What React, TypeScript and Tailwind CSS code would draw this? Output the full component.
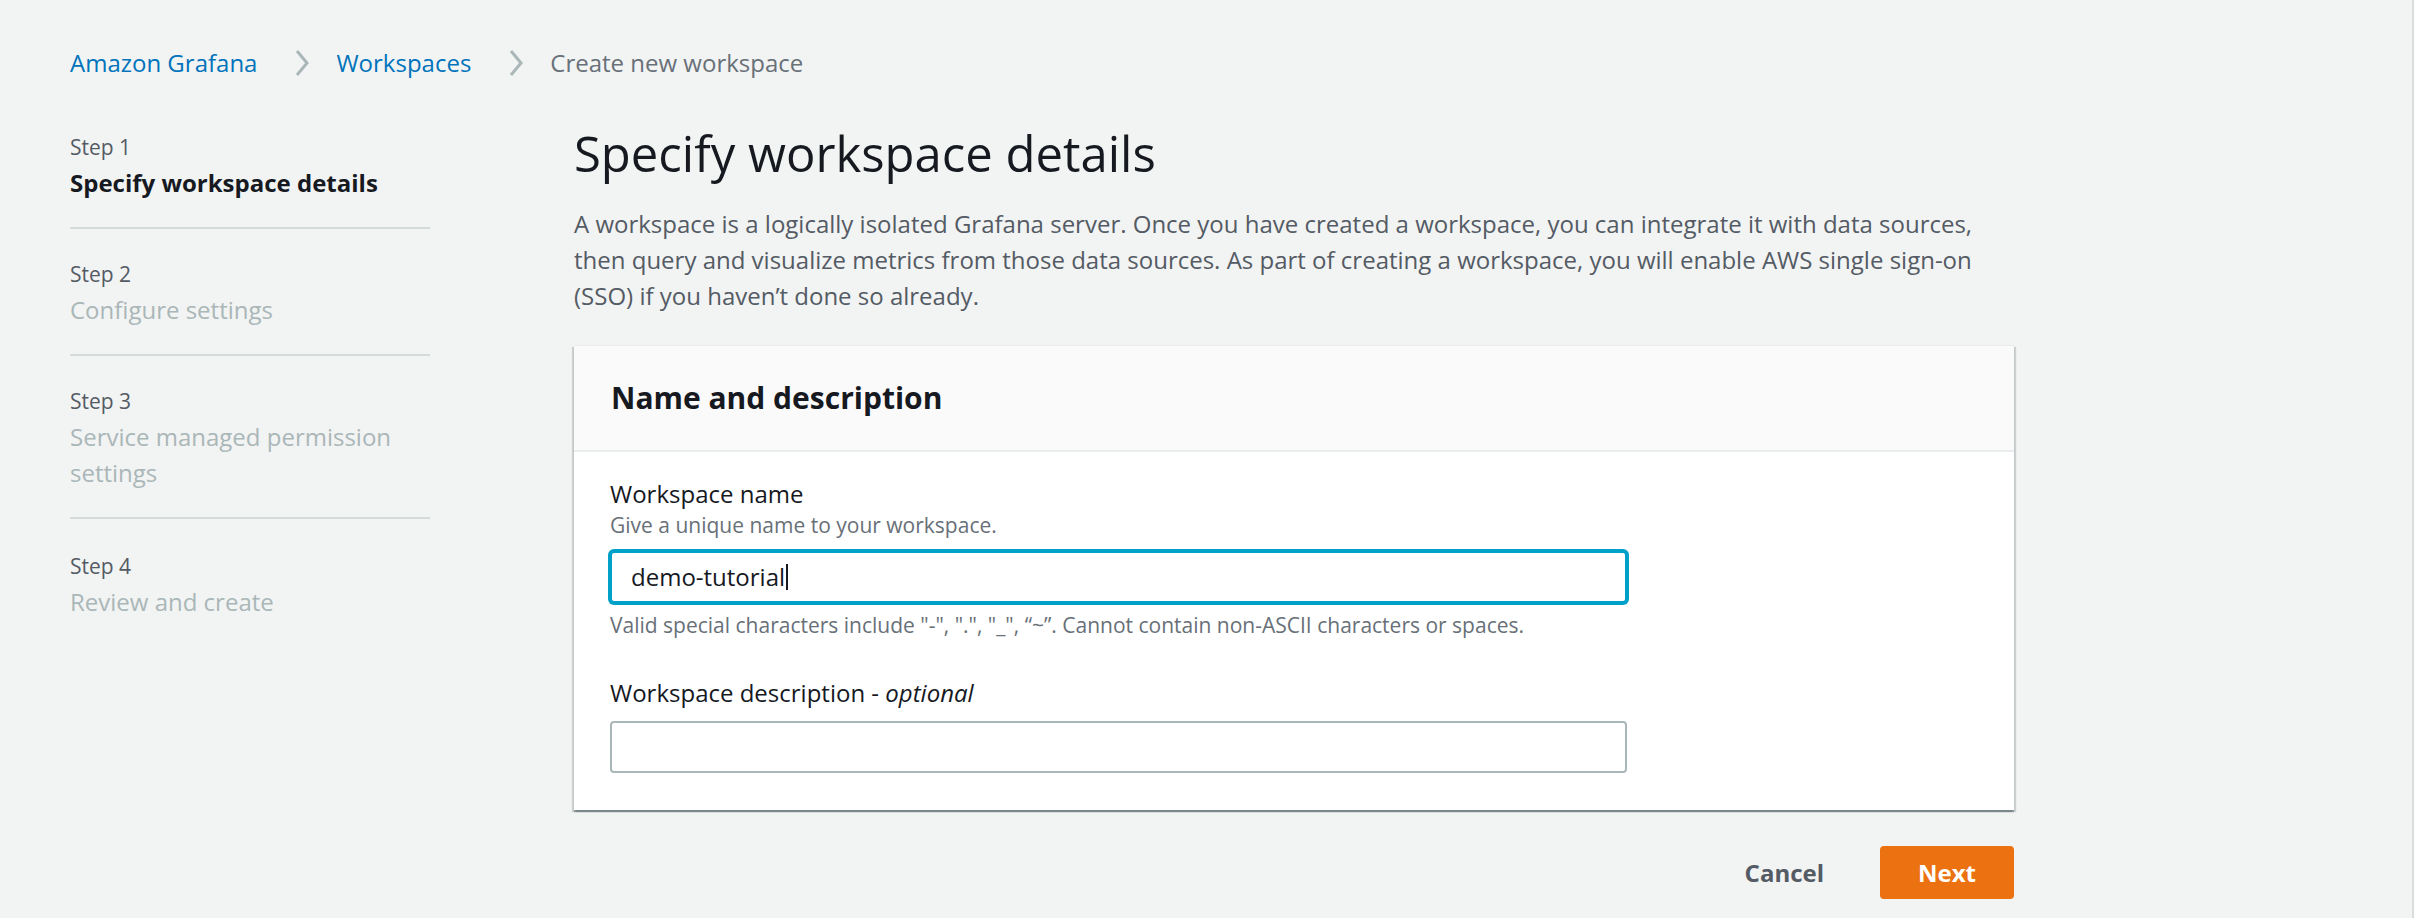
import React from "react";

function Chevron() {
  return (
    <svg width="14" height="26" viewBox="0 0 14 26" className="shrink-0" aria-hidden="true">
      <polyline points="2,1 12,13 2,25" fill="none" stroke="#aab7b8" strokeWidth="3" />
    </svg>
  );
}

type Step = { n: number; title: string; active?: boolean };

const steps: Step[] = [
  { n: 1, title: "Specify workspace details", active: true },
  { n: 2, title: "Configure settings" },
  { n: 3, title: "Service managed permission settings" },
  { n: 4, title: "Review and create" },
];

export default function App() {
  return (
    <div className="min-h-screen w-full bg-[#f2f3f3] border-r-2 border-[#d9dddd] pl-[70px] pt-[45px] font-['Open_Sans','Noto_Sans',sans-serif]">
      {/* Breadcrumb */}
      <nav className="flex h-[36px] items-center text-[24px] leading-[36px]">
        <span className="text-[#0073bb]">Amazon Grafana</span>
        <span className="ml-[38px] mr-[27px] flex items-center">
          <Chevron />
        </span>
        <span className="text-[#0073bb]">Workspaces</span>
        <span className="ml-[38px] mr-[27px] flex items-center">
          <Chevron />
        </span>
        <span className="text-[#687078]">Create new workspace</span>
      </nav>

      <div className="mt-[41px] flex items-start">
        {/* Steps */}
        <aside className="w-[360px] shrink-0 pt-[10px]">
          {steps.map((s, i) => (
            <div
              key={s.n}
              className={
                (i === 0 ? "pt-0 " : i === steps.length - 1 ? "pt-[32px] " : "pt-[30px] ") +
                (i === steps.length - 1 ? "" : "pb-[26px] border-b-2 border-[#d5dbdb]")
              }
            >
              <div className="text-[21px] leading-[30px] text-[#545b64]">Step {s.n}</div>
              <div
                className={
                  s.active
                    ? "mt-[3px] text-[24px] leading-[36px] font-bold text-[#16191f]"
                    : "mt-[3px] text-[24px] leading-[36px] text-[#aab7b8]"
                }
              >
                {s.title}
              </div>
            </div>
          ))}
        </aside>

        {/* Main */}
        <main className="ml-[144px] w-[1440px] shrink-0">
          <h1 className="text-[49px] leading-[63px] font-normal text-[#16191f]">
            Specify workspace details
          </h1>
          <p className="mt-[21px] text-[24px] leading-[36px] text-[#545b64]">
            <span className="whitespace-nowrap">
              A workspace is a logically isolated Grafana server. Once you have created a workspace, you can integrate it with data sources,
            </span>
            <br />
            <span className="whitespace-nowrap">
              then query and visualize metrics from those data sources. As part of creating a workspace, you will enable AWS single sign-on
            </span>
            <br />
            <span className="whitespace-nowrap">(SSO) if you haven’t done so already.</span>
          </p>

          {/* Card */}
          <section className="mt-[31px] bg-white border-t border-[#eaeded] shadow-[0_2px_1px_0_rgba(0,28,36,0.3),2px_2px_1px_0_rgba(0,28,36,0.15),-2px_2px_1px_0_rgba(0,28,36,0.15)]">
            <div className="bg-[#fafafa] border-b-2 border-[#eaeded] px-[37px] py-[32px]">
              <h2 className="text-[30px] leading-[40px] font-bold text-[#16191f]">Name and description</h2>
            </div>
            <div className="px-[36px] pt-[26px] pb-[37px]">
              {/* Field 1 */}
              <div className="w-[1017px]">
                <div className="text-[24px] leading-[32px] text-[#16191f]">Workspace name</div>
                <div className="mt-[2px] text-[21px] leading-[26px] text-[#687078]">Give a unique name to your workspace.</div>
                <div className="mt-[13px] flex h-[52px] items-center rounded-[4px] border-2 border-[#00a1c9] bg-white pl-[19px] shadow-[0_0_0_2px_#00a1c9]">
                  <span className="text-[24px] leading-[32px] text-[#16191f]">demo-tutorial</span>
                  <span className="ml-[1px] h-[26px] w-[2px] bg-[#16191f]" />
                </div>
                <div className="mt-[9px] text-[21px] leading-[26px] text-[#687078]">
                  Valid special characters include "-", ".", "_", “~”. Cannot contain non-ASCII characters or spaces.
                </div>
              </div>

              {/* Field 2 */}
              <div className="mt-[39px] w-[1017px]">
                <div className="text-[24px] leading-[32px] text-[#16191f]">
                  Workspace description - <i>optional</i>
                </div>
                <div className="mt-[12px] h-[52px] rounded-[4px] border-2 border-[#aab7b8] bg-white" />
              </div>
            </div>
          </section>

          {/* Actions */}
          <div className="mt-[36px] flex justify-end gap-[18px]">
            <button className="h-[53px] px-[38px] text-[24px] font-bold text-[#545b64]">Cancel</button>
            <button className="h-[53px] rounded-[4px] bg-[#ec7211] px-[38px] text-[24px] font-bold text-white">
              Next
            </button>
          </div>
        </main>
      </div>
    </div>
  );
}
